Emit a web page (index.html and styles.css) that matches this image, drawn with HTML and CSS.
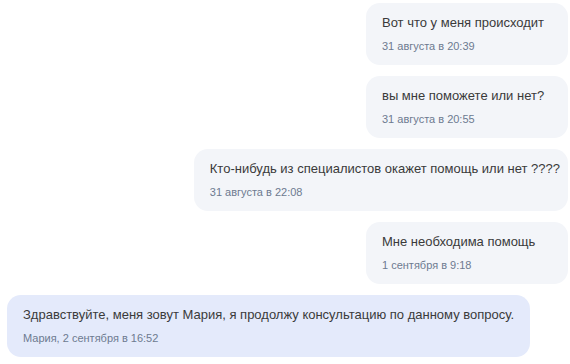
FILE: index.html
```html
<!DOCTYPE html>
<html lang="ru">
<head>
    <meta charset="UTF-8">
    <meta name="viewport" content="width=device-width, initial-scale=1.0">
    <title>Чат</title>
    <link rel="stylesheet" href="styles.css">
</head>
<body>

    <div class="chat">
        <div class="msg msg-out">
            <div class="msg-text">Вот что у меня происходит</div>
            <div class="msg-time">31 августа в 20:39</div>
        </div>

        <div class="msg msg-out">
            <div class="msg-text">вы мне поможете или нет?</div>
            <div class="msg-time">31 августа в 20:55</div>
        </div>

        <div class="msg msg-out">
            <div class="msg-text">Кто-нибудь из специалистов окажет помощь или нет ????</div>
            <div class="msg-time">31 августа в 22:08</div>
        </div>

        <div class="msg msg-out">
            <div class="msg-text">Мне необходима помощь</div>
            <div class="msg-time">1 сентября в 9:18</div>
        </div>

        <div class="msg msg-in">
            <div class="msg-text">Здравствуйте, меня зовут Мария, я продолжу консультацию по данному вопросу.</div>
            <div class="msg-time">Мария, 2 сентября в 16:52</div>
        </div>
    </div>

</body>
</html>
```

FILE: styles.css
```css
body {
    margin: 0;
    padding: 0;
    background-color: #fff;
    font-family: "Liberation Sans", Arial, sans-serif;
}
.chat {
    display: flex;
    flex-direction: column;
    gap: 11px;
    padding: 3px 2px 0 7px;
}
.msg {
    display: flex;
    flex-direction: column;
    gap: 7px;
    padding: 11px 8px 11px 16px;
    border-radius: 14px;
    box-sizing: border-box;
}
.msg-out {
    align-self: flex-end;
    min-width: 202px;
    background-color: #f3f5f9;
}
.msg-in {
    align-self: flex-start;
    padding-right: 16px;
    background-color: #e4eafb;
}
.msg-text {
    font-size: 13px;
    line-height: 18px;
    color: #3a3a3a;
}
.msg-time {
    font-size: 11px;
    line-height: 15px;
    color: #6d7a90;
}
```
